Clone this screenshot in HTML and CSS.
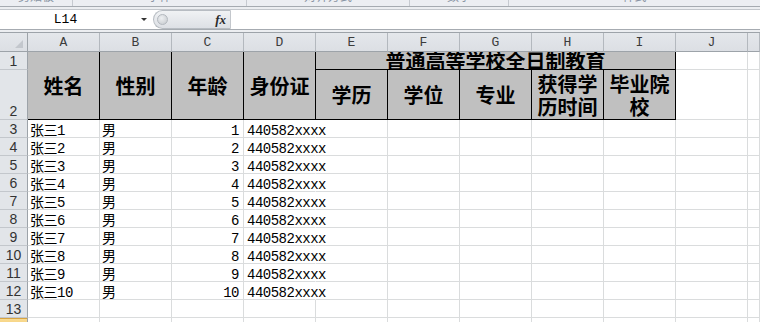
FILE: index.html
```html
<!DOCTYPE html>
<html lang="zh-CN">

<head>
    <meta charset="UTF-8">
    <title>学历信息表</title>
    <link rel="stylesheet" href="styles.css">
</head>

<body>
    <!-- 功能区底部 -->
    <div class="ribbon">
        <div class="group g1"><span>剪贴板</span></div>
        <div class="group g2"><span>字体</span></div>
        <div class="group g3"><span>对齐方式</span></div>
        <div class="group g4"><span>数字</span></div>
        <div class="group g5"><span>样式</span></div>
    </div>

    <!-- 编辑栏 -->
    <div class="formula-bar">
        <div class="name-box"><span>L14</span><i class="caret"></i></div>
        <div class="fx-box"><span class="knob"></span><span class="fx">fx</span></div>
        <div class="formula-input"></div>
    </div>

    <!-- 工作表 -->
    <div class="sheet">
        <div class="corner"><i></i></div>
        <div class="ch">A</div><div class="ch">B</div><div class="ch">C</div><div class="ch">D</div><div class="ch">E</div>
        <div class="ch">F</div><div class="ch">G</div><div class="ch">H</div><div class="ch">I</div><div class="ch">J</div><div class="ch"></div>

        <div class="rh">1</div>
        <div class="hd tall">姓名</div>
        <div class="hd tall">性别</div>
        <div class="hd tall">年龄</div>
        <div class="hd tall">身份证</div>
        <div class="hd title">普通高等学校全日制教育</div>
        <div class="c"></div><div class="c"></div>

        <div class="rh">2</div>
        <div class="hd">学历</div>
        <div class="hd">学位</div>
        <div class="hd">专业</div>
        <div class="hd">获得学历时间</div>
        <div class="hd">毕业院校</div>
        <div class="c"></div><div class="c"></div>

        <div class="rh">3</div><div class="c">张三1</div><div class="c">男</div><div class="c num">1</div><div class="c spill">440582xxxx</div>
        <div class="c"></div><div class="c"></div><div class="c"></div><div class="c"></div><div class="c"></div><div class="c"></div><div class="c"></div>
        <div class="rh">4</div><div class="c">张三2</div><div class="c">男</div><div class="c num">2</div><div class="c spill">440582xxxx</div>
        <div class="c"></div><div class="c"></div><div class="c"></div><div class="c"></div><div class="c"></div><div class="c"></div><div class="c"></div>
        <div class="rh">5</div><div class="c">张三3</div><div class="c">男</div><div class="c num">3</div><div class="c spill">440582xxxx</div>
        <div class="c"></div><div class="c"></div><div class="c"></div><div class="c"></div><div class="c"></div><div class="c"></div><div class="c"></div>
        <div class="rh">6</div><div class="c">张三4</div><div class="c">男</div><div class="c num">4</div><div class="c spill">440582xxxx</div>
        <div class="c"></div><div class="c"></div><div class="c"></div><div class="c"></div><div class="c"></div><div class="c"></div><div class="c"></div>
        <div class="rh">7</div><div class="c">张三5</div><div class="c">男</div><div class="c num">5</div><div class="c spill">440582xxxx</div>
        <div class="c"></div><div class="c"></div><div class="c"></div><div class="c"></div><div class="c"></div><div class="c"></div><div class="c"></div>
        <div class="rh">8</div><div class="c">张三6</div><div class="c">男</div><div class="c num">6</div><div class="c spill">440582xxxx</div>
        <div class="c"></div><div class="c"></div><div class="c"></div><div class="c"></div><div class="c"></div><div class="c"></div><div class="c"></div>
        <div class="rh">9</div><div class="c">张三7</div><div class="c">男</div><div class="c num">7</div><div class="c spill">440582xxxx</div>
        <div class="c"></div><div class="c"></div><div class="c"></div><div class="c"></div><div class="c"></div><div class="c"></div><div class="c"></div>
        <div class="rh">10</div><div class="c">张三8</div><div class="c">男</div><div class="c num">8</div><div class="c spill">440582xxxx</div>
        <div class="c"></div><div class="c"></div><div class="c"></div><div class="c"></div><div class="c"></div><div class="c"></div><div class="c"></div>
        <div class="rh">11</div><div class="c">张三9</div><div class="c">男</div><div class="c num">9</div><div class="c spill">440582xxxx</div>
        <div class="c"></div><div class="c"></div><div class="c"></div><div class="c"></div><div class="c"></div><div class="c"></div><div class="c"></div>
        <div class="rh">12</div><div class="c">张三10</div><div class="c">男</div><div class="c num">10</div><div class="c spill">440582xxxx</div>
        <div class="c"></div><div class="c"></div><div class="c"></div><div class="c"></div><div class="c"></div><div class="c"></div><div class="c"></div>

        <div class="rh">13</div><div class="c"></div><div class="c"></div><div class="c"></div><div class="c"></div><div class="c"></div>
        <div class="c"></div><div class="c"></div><div class="c"></div><div class="c"></div><div class="c"></div><div class="c"></div>
        <div class="rh sel">14</div><div class="c"></div><div class="c"></div><div class="c"></div><div class="c"></div><div class="c"></div>
        <div class="c"></div><div class="c"></div><div class="c"></div><div class="c"></div><div class="c"></div><div class="c"></div>
    </div>
</body>

</html>
```

FILE: styles.css
```css
/* Geral */
* {
    box-sizing: border-box;
}

body {
    margin: 0;
    width: 760px;
    height: 322px;
    overflow: hidden;
    background-color: #eceef1;
    font-family: "Liberation Mono", "Noto Sans CJK SC", monospace;
    color: #000;
}

/* Ribbon */
.ribbon {
    display: flex;
    height: 7px;
    background-color: #eceef2;
    border-bottom: 1px solid #a6abb1;
    overflow: hidden;
}

.group {
    height: 6px;
    overflow: hidden;
    border-right: 1px solid #c6cad0;
    text-align: center;
    font: 12px "Noto Sans CJK SC", sans-serif;
    color: #8a95a4;
}

.group span {
    display: block;
    line-height: 12px;
    margin-top: -10px;
}

.g1 { width: 73px; }
.g2 { width: 174px; }
.g3 { width: 163px; }
.g4 { width: 99px; }
.g5 { flex: 1; border-right: none; }

/* Barra de fórmulas */
.formula-bar {
    display: flex;
    height: 21px;
    margin-top: 2px;
    background-color: #fff;
    border-top: 1px solid #c3c7cc;
    border-bottom: 1px solid #a6abb1;
}

.name-box {
    width: 153px;
    display: flex;
    align-items: center;
    padding-right: 6px;
}

.name-box span {
    flex: 1;
    text-align: center;
    padding-right: 10px;
    font-size: 13px;
}

.caret {
    width: 0;
    height: 0;
    border-left: 3px solid transparent;
    border-right: 3px solid transparent;
    border-top: 3px solid #333;
}

.fx-box {
    width: 78px;
    display: flex;
    align-items: center;
    padding: 0 4px 0 3px;
    background: linear-gradient(#f0f2f4, #dde0e5);
    border: 1px solid #b7bcc2;
    border-right-color: #c3c7cc;
    border-radius: 10px 0 0 10px;
}

.knob {
    width: 11px;
    height: 11px;
    border-radius: 50%;
    background: radial-gradient(circle at 40% 35%, #eef0f2, #c4c8cd);
    border: 1px solid #b3b8be;
}

.fx {
    margin-left: auto;
    font: italic bold 13px "Liberation Serif", serif;
    color: #2b2b2b;
}

.formula-input {
    flex: 1;
}

/* Planilha */
.sheet {
    display: grid;
    grid-template-columns: 28px repeat(10, 72px) 1fr;
    grid-template-rows: 19px 18px 50px repeat(12, 18px);
    margin-top: 2px;
    background-color: #fff;
    border-top: 1px solid #9da3a9;
}

.sheet > div {
    border-right: 1px solid #dadcdd;
    border-bottom: 1px solid #dadcdd;
    min-width: 0;
}

.corner {
    display: flex;
    justify-content: flex-end;
    align-items: flex-end;
    padding: 0 4px 3px 0;
    background: linear-gradient(#e4e7eb, #dcdfe4);
}

.sheet > .corner,
.sheet > .ch {
    border-right-color: #b3b8be;
    border-bottom-color: #9da3a9;
}

.sheet > .corner {
    border-right-color: #9da3a9;
}

.corner i {
    width: 8px;
    height: 8px;
    background-color: #c3c7cd;
    clip-path: polygon(100% 0, 100% 100%, 0 100%);
}

.ch {
    display: flex;
    justify-content: center;
    align-items: center;
    background: linear-gradient(#e4e7eb, #dcdfe4);
    font-size: 13px;
    color: #3c3c3c;
}

.rh {
    display: flex;
    justify-content: center;
    align-items: flex-end;
    background-color: #e2e5e9;
    font: 14px/16px "Liberation Sans", sans-serif;
    color: #333;
}

.sheet > .rh {
    border-right-color: #9da3a9;
    border-bottom-color: #c3c7cc;
}

.rh.sel {
    background: linear-gradient(#f9dc95, #f2c360);
    box-shadow: inset 0 1px #d9a441;
}

/* Cabeçalho da tabela */
.hd {
    display: flex;
    justify-content: center;
    align-items: center;
    padding: 0 4px;
    background-color: #c0c0c0;
    font: bold 20px/23px "Noto Sans CJK SC", sans-serif;
    text-align: center;
}

.sheet > .hd {
    border-right-color: #000;
    border-bottom-color: #000;
}

.hd.tall {
    grid-row: span 2;
}

.hd.title {
    grid-column: span 5;
    align-items: flex-end;
    line-height: 17px;
    overflow: hidden;
    white-space: nowrap;
}

/* Células */
.c {
    display: flex;
    align-items: flex-end;
    padding: 0 2px 0 2px;
    font-size: 14px;
    line-height: 12px;
    letter-spacing: -0.5px;
    white-space: nowrap;
}

.num {
    justify-content: flex-end;
    padding-right: 4px;
}

.sheet > .spill {
    border-right-color: transparent;
    padding-left: 3px;
}
```
